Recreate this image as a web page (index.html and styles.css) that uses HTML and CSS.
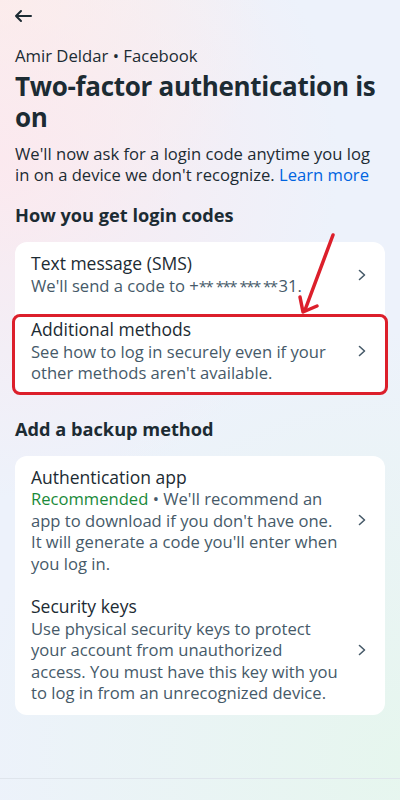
FILE: index.html
```html
<!DOCTYPE html>
<html lang="en">
<head>
    <meta charset="UTF-8">
    <meta name="viewport" content="width=device-width, initial-scale=1.0">
    <title>Two-factor authentication</title>
    <link rel="stylesheet" href="styles.css">
</head>
<body>

    <!-- Top bar -->
    <header class="top-bar">
        <svg class="back" width="20" height="20" viewBox="0 0 20 20" fill="none" stroke="#1c2b33" stroke-width="2" stroke-linecap="round" stroke-linejoin="round">
            <path d="M18 10H3M8 5L3 10L8 15"/>
        </svg>
    </header>

    <main class="content">
        <p class="account">Amir Deldar • Facebook</p>
        <h1 class="title">Two-factor authentication is on</h1>
        <p class="intro">We'll now ask for a login code anytime you log in on a device we don't recognize. <a href="#">Learn more</a></p>

        <!-- Login codes -->
        <h2 class="section-title">How you get login codes</h2>
        <div class="card">
            <div class="row">
                <div class="row-text">
                    <div class="row-title">Text message (SMS)</div>
                    <div class="row-sub">We'll send a code to +<span class="mask">** *** *** **</span>31.</div>
                </div>
                <svg class="chevron" width="8" height="12" viewBox="0 0 8 12" fill="none" stroke="#465a69" stroke-width="1.6" stroke-linecap="round" stroke-linejoin="round"><path d="M1.5 1.5L6.5 6L1.5 10.5"/></svg>
            </div>
            <div class="row highlighted">
                <div class="row-text">
                    <div class="row-title">Additional methods</div>
                    <div class="row-sub">See how to log in securely even if your other methods aren't available.</div>
                </div>
                <svg class="chevron" width="8" height="12" viewBox="0 0 8 12" fill="none" stroke="#465a69" stroke-width="1.6" stroke-linecap="round" stroke-linejoin="round"><path d="M1.5 1.5L6.5 6L1.5 10.5"/></svg>
            </div>
        </div>

        <!-- Backup -->
        <h2 class="section-title backup">Add a backup method</h2>
        <div class="card">
            <div class="row">
                <div class="row-text">
                    <div class="row-title">Authentication app</div>
                    <div class="row-sub"><span class="green">Recommended</span> • We'll recommend an app to download if you don't have one. It will generate a code you'll enter when you log in.</div>
                </div>
                <svg class="chevron" width="8" height="12" viewBox="0 0 8 12" fill="none" stroke="#465a69" stroke-width="1.6" stroke-linecap="round" stroke-linejoin="round"><path d="M1.5 1.5L6.5 6L1.5 10.5"/></svg>
            </div>
            <div class="row">
                <div class="row-text">
                    <div class="row-title">Security keys</div>
                    <div class="row-sub">Use physical security keys to protect your account from unauthorized access. You must have this key with you to log in from an unrecognized device.</div>
                </div>
                <svg class="chevron" width="8" height="12" viewBox="0 0 8 12" fill="none" stroke="#465a69" stroke-width="1.6" stroke-linecap="round" stroke-linejoin="round"><path d="M1.5 1.5L6.5 6L1.5 10.5"/></svg>
            </div>
        </div>
    </main>

    <div class="bottom-line"></div>

    <!-- Annotation arrow -->
    <svg class="arrow" width="60" height="90" viewBox="0 0 60 90" fill="none" stroke="#dc1f2b" stroke-width="3.5" stroke-linecap="round" stroke-linejoin="round">
        <path d="M42 3L14 78"/>
        <path d="M9 65L12 80L26 74" />
    </svg>

</body>
</html>
```

FILE: styles.css
```css
/* Basic Reset */
* {
    margin: 0;
    padding: 0;
    box-sizing: border-box;
}

body {
    font-family: 'Open Sans', 'Liberation Sans', sans-serif;
    color: #1c2b33;
    width: 400px;
    height: 800px;
    overflow: hidden;
    position: relative;
    background:
        radial-gradient(circle at 0% 20%, rgba(252, 232, 238, 0.9) 0, rgba(252, 232, 238, 0) 45%),
        radial-gradient(circle at 0% 0%, rgba(253, 240, 232, 0.9) 0, rgba(253, 240, 232, 0) 30%),
        radial-gradient(circle at 100% 95%, rgba(230, 246, 238, 1) 0, rgba(230, 246, 238, 0) 50%),
        #edf2fb;
}

/* Top bar */
.top-bar {
    height: 32px;
    padding: 6px 0 0 13px;
}

.content {
    padding: 0 15px;
}

.account {
    font-size: 16.7px;
    line-height: 21px;
    margin-top: 13px;
}

.title {
    font-size: 26px;
    line-height: 31px;
    font-weight: 700;
    margin-top: 5px;
    letter-spacing: -0.3px;
}

.intro {
    font-size: 16.6px;
    line-height: 21px;
    margin-top: 10px;
}

.intro a {
    color: #0064e0;
    text-decoration: none;
}

.section-title {
    font-size: 18.2px;
    line-height: 24px;
    font-weight: 700;
    margin-top: 18px;
    margin-bottom: 15px;
}

.section-title.backup {
    margin-top: 22px;
    margin-bottom: 15px;
}

/* Cards */
.card {
    background: #fff;
    border-radius: 12px;
}

.row {
    display: flex;
    align-items: center;
    padding: 11px 16px;
}

.row-text {
    flex: 1;
    max-width: 307px;
}

.row-title {
    font-size: 17.5px;
    line-height: 21.5px;
}

.row-sub {
    font-size: 16.6px;
    line-height: 21.5px;
    color: #465a69;
}

.mask {
    font-size: 15px;
    letter-spacing: -1.5px;
    word-spacing: 1px;
    margin-right: 2px;
}

.green {
    color: #1a8a3a;
}

.chevron {
    margin-left: auto;
    margin-right: 3px;
    flex-shrink: 0;
}

/* Red annotation */
.highlighted {
    position: relative;
}

.highlighted::after {
    content: "";
    position: absolute;
    left: -3px;
    right: -3px;
    top: 6px;
    bottom: 0;
    border: 3px solid #dc1f2b;
    border-radius: 8px;
}

.arrow {
    position: absolute;
    left: 291px;
    top: 232px;
}

.bottom-line {
    position: absolute;
    left: 0;
    right: 0;
    top: 778px;
    height: 1px;
    background: #dfe5ec;
}
```
